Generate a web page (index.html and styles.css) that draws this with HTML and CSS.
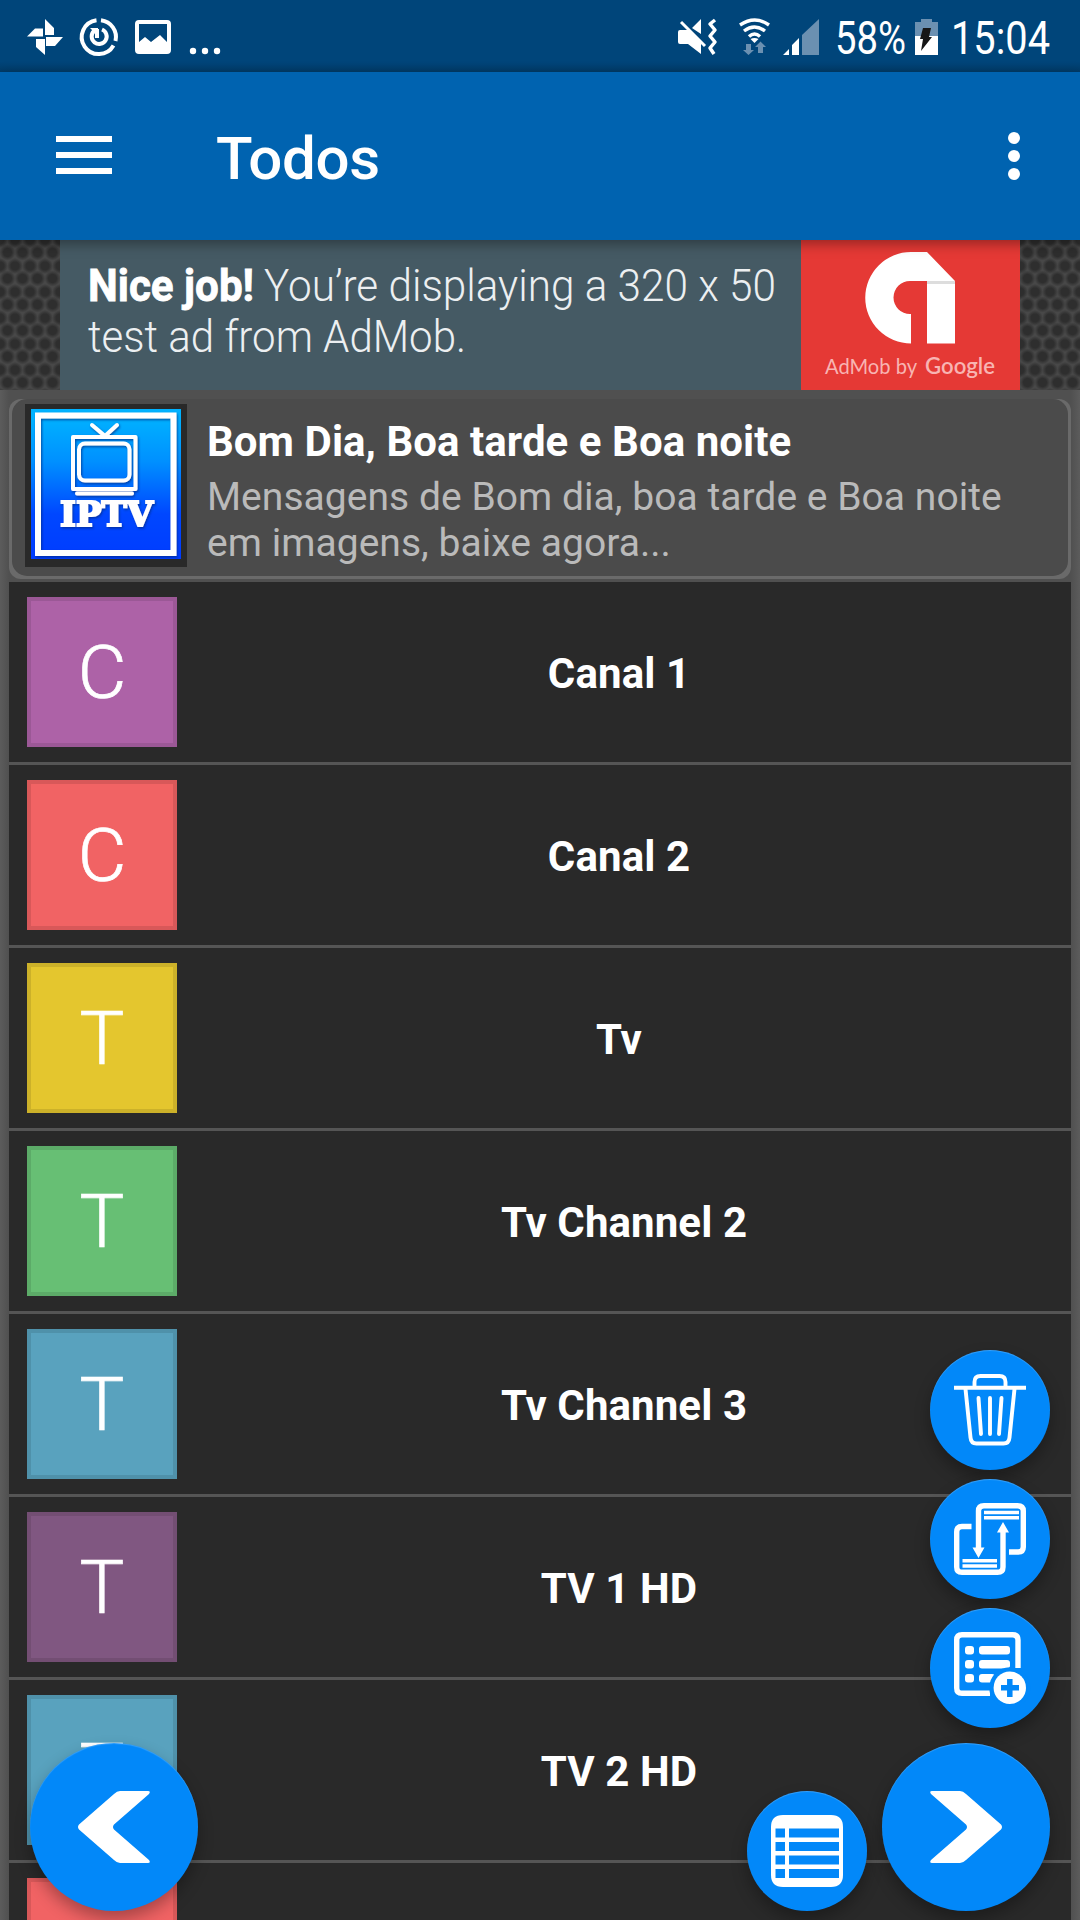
FILE: index.html
```html
<!DOCTYPE html>
<html lang="pt">
<head>
    <meta charset="UTF-8">
    <meta name="viewport" content="width=device-width, initial-scale=1.0">
    <title>IPTV - Todos</title>
    <link rel="stylesheet" href="styles.css">
</head>
<body>
    <div class="screen">
        <!-- Status bar -->
        <div class="status-bar">
            <svg class="status-icons" width="230" height="72" viewBox="0 0 230 72" fill="#fff">
                <path d="M45 19l9 9v7h-9zM27 36.500l8-8h8v8zM46 37h17l-8 9h-9zM36 39h9v16l-9-8z"/>
                <g fill="none" stroke="#fff" stroke-width="4">
                    <path d="M96.500 20.200A17 17 0 1 0 113.500 45.500M101 20.200A17 17 0 0 1 115.500 41"/>
                    <path d="M94 31a7.500 7.500 0 1 0 8-1.500M97 38v-9"/>
                </g>
                <path d="M90 28h8v8z"/>
                <path fill-rule="evenodd" d="M139 20h28q4 0 4 4v26q0 4-4 4h-28q-4 0-4-4V24q0-4 4-4zM139 24v18l6-5 6 5 9-7 7 7V24z"/>
                <circle cx="193" cy="51" r="3.200"/><circle cx="205" cy="51" r="3.200"/><circle cx="217" cy="51" r="3.200"/>
            </svg>
            <svg class="status-icons" width="410" height="72" viewBox="670 0 410 72" fill="#fff">
                <path d="M678 32q0-2 2-2h8l13 13v11l-13-10h-8q-2 0-2-2zM692 28l9-9v15z"/>
                <path d="M681 22l24 24" fill="none" stroke="#fff" stroke-width="3"/>
                <path d="M715 20l-5 4 5 6-5 6 5 6-5 6 4 6" fill="none" stroke="#fff" stroke-width="3.500" stroke-linejoin="round"/>
                <path d="M740 25q15-10 29 0M744 31q10.500-8 21 0M749 36.500q5.500-5 11 0" fill="none" stroke="#fff" stroke-width="3.400"/>
                <path d="M750.500 39q4-2 8 0l-4 4z"/>
                <path fill="#6b90b1" d="M746 44h5v6h3l-5.500 5-5.500-5h3zM758 53v-6h-3l5.500-5.500L766 47h-3v6z"/>
                <path d="M783 55h6v-6zM792 55h7V38l-7 7z"/>
                <path fill="#6b90b1" d="M802 55h17V19l-17 16zM915 22h6v-3h11v3h6v14h-23z"/>
                <path d="M915 36h23v19h-23z"/>
                <path fill="#161616" d="M923 28h8l-2 9h3l-11 14 2-12h-3z"/>
                <text class="status-text" x="835" y="54" textLength="71" lengthAdjust="spacingAndGlyphs">58%</text>
                <text class="status-text" x="951" y="54" textLength="99" lengthAdjust="spacingAndGlyphs">15:04</text>
            </svg>
        </div>

        <!-- Toolbar -->
        <header class="toolbar">
            <div class="menu-button"><span></span><span></span><span></span></div>
            <h1>Todos</h1>
            <div class="more-button"><span></span><span></span><span></span></div>
        </header>

        <!-- Ad banner -->
        <div class="ad-row">
            <div class="ad">
                <svg class="ad-message" width="741" height="150" viewBox="0 0 741 150">
                    <text class="ad-strong" x="28" y="61" textLength="166" lengthAdjust="spacingAndGlyphs">Nice job!</text>
                    <text x="204" y="61" textLength="512" lengthAdjust="spacingAndGlyphs">You’re displaying a 320 x 50</text>
                    <text x="28" y="112" textLength="378" lengthAdjust="spacingAndGlyphs">test ad from AdMob.</text>
                </svg>
                <div class="ad-brand">
                    <svg width="219" height="150" viewBox="801 240 219 150">
                        <path fill="#fff" d="M911 252h16l28 29v62.500h-28v-62.500h-17a16.500 16.500 0 0 0 0 33h1v29.500a45.750 45.750 0 0 1 0-91.500z"/>
                        <path fill="#ddd" d="M927 281h28v3h-28z"/>
                        <text x="825" y="374" textLength="92" lengthAdjust="spacingAndGlyphs">AdMob by</text>
                        <text class="brand-name" x="925" y="374" textLength="70" lengthAdjust="spacingAndGlyphs">Google</text>
                    </svg>
                </div>
            </div>
        </div>

        <main class="content">
            <!-- Promoted app -->
            <div class="promo">
                <div class="promo-inner">
                    <div class="promo-icon">
                        <svg width="150" height="150" viewBox="0 0 150 150">
                            <defs>
                                <linearGradient id="sky" x1="0" y1="0" x2="0" y2="1">
                                    <stop offset=".05" stop-color="#00b2ff"/>
                                    <stop offset=".35" stop-color="#0090ff"/>
                                    <stop offset=".7" stop-color="#0047ff"/>
                                    <stop offset="1" stop-color="#003cff"/>
                                </linearGradient>
                                <filter id="soft" x="-10%" y="-10%" width="120%" height="120%">
                                    <feDropShadow dx="1" dy="1.500" stdDeviation="1" flood-color="#002a80" flood-opacity=".7"/>
                                </filter>
                            </defs>
                            <path fill="url(#sky)" d="M0 0h150v150H0z"/>
                            <g fill="none" stroke="#fff" filter="url(#soft)">
                                <path stroke-width="6" d="M7 6.500h135.500V144H7z"/>
                                <path stroke-width="4" d="M42 28h62.500v52H42z" stroke-linejoin="round"/>
                                <rect x="48" y="34.500" width="50.500" height="37" rx="6" stroke-width="4"/>
                                <path stroke-width="4" stroke-linecap="round" d="M61 16l13 11 12-11M46 84.500h55"/>
                                <text class="iptv" x="29" y="117" textLength="93" lengthAdjust="spacingAndGlyphs">IPTV</text>
                            </g>
                        </svg>
                    </div>
                    <div class="promo-text">
                        <h2>Bom Dia, Boa tarde e Boa noite</h2>
                        <p>Mensagens de Bom dia, boa tarde e Boa noite em imagens, baixe agora...</p>
                    </div>
                </div>
            </div>

            <!-- Channel list -->
            <ul class="channels">
                <li><span class="avatar violet">C</span><b>Canal 1</b></li>
                <li><span class="avatar red">C</span><b>Canal 2</b></li>
                <li><span class="avatar yellow">T</span><b>Tv</b></li>
                <li class="indented"><span class="avatar green">T</span><b>Tv Channel 2</b></li>
                <li class="indented"><span class="avatar blue">T</span><b>Tv Channel 3</b></li>
                <li><span class="avatar plum">T</span><b>TV 1 HD</b></li>
                <li><span class="avatar blue">T</span><b>TV 2 HD</b></li>
                <li><span class="avatar red"></span></li>
            </ul>
        </main>

        <!-- Floating buttons -->
        <div class="fabs">
            <div class="fab fab-large">
                <svg width="72" height="72" viewBox="0 0 72 72" fill="#fff">
                    <path d="M42 0h28q3 0 1 3L36 33.500q-2 2.500 0 5L71 69q2 3-1 3H42q-3 0-6-3L1 38.500q-2-2.500 0-5L36 3q3-3 6-3z"/>
                </svg>
            </div>
            <div class="fab fab-list">
                <svg width="72" height="72" viewBox="0 0 72 72" fill="#fff">
                    <path fill-rule="evenodd" d="M12 0h48q12 0 12 12v48q0 12-12 12H12Q0 72 0 60V12Q0 0 12 0zM4.500 13.500v9H14v-9zM18 13.500v9h50v-9zM4.500 27v9H14v-9zM18 27v9h50v-9zM4.500 40.500v9H14v-9zM18 40.500v9h50v-9zM4.500 54v9H14v-9zM18 54v9h50v-9z"/>
                </svg>
            </div>
            <div class="fab-column">
                <div class="fab">
                    <svg width="72" height="72" viewBox="0 0 72 72" fill="none" stroke="#fff" stroke-width="3.900" stroke-linecap="round">
                        <path stroke-linecap="butt" d="M0 13.700h72"/>
                        <path d="M20.500 13V8q0-6 6-6h19q6 0 6 6v5M11.500 15l5 48.500q.5 6 6 6h27q5.500 0 6-6l5-48.500M24.500 24l2.500 36M36 24v36M47.500 24L45 60"/>
                    </svg>
                </div>
                <div class="fab">
                    <svg width="72" height="72" viewBox="0 0 72 72" fill="none" stroke="#fff" stroke-width="5.400">
                        <path d="M24.500 46V8q0-5.300 5.500-5.300h33.500q5.800 0 5.800 5.300v36q0 5-5 5H55M17.500 23.500H8q-5.300 0-5.300 5.500v35q0 5.300 5.300 5.300h35.500q5.500 0 5.500-5.300V28"/>
                        <path stroke-width="3.400" d="M30 9.500h35M30 14.700h35M8.500 57.700h34.500M8.500 63h34.500"/>
                        <path fill="#fff" stroke="none" d="M18.500 44.500h12L24.500 55zM43 29.500h12L49 19z"/>
                    </svg>
                </div>
                <div class="fab">
                    <svg width="72" height="72" viewBox="0 0 72 72" fill="#fff">
                        <path fill="none" stroke="#fff" stroke-width="5.400" d="M64 36V8q0-5.300-5.500-5.300H8Q2.700 2.700 2.700 8v48q0 5.300 5.300 5.300h28"/>
                        <rect x="11" y="14" width="9" height="8.500" rx="3"/><rect x="25" y="14" width="31" height="8.500" rx="3"/>
                        <rect x="11" y="28" width="9" height="8.500" rx="3"/><rect x="25" y="28" width="31" height="8.500" rx="3"/>
                        <rect x="11" y="42" width="9" height="8.500" rx="3"/><rect x="25" y="42" width="16" height="8.500" rx="3"/>
                        <circle cx="55.800" cy="55.800" r="19" fill="#0288f9" stroke="#0288f9" stroke-width="3"/>
                        <circle cx="55.800" cy="55.800" r="16.200"/>
                        <path stroke="#0288f9" stroke-width="5.500" d="M47 55.800h18M55.800 47v18"/>
                    </svg>
                </div>
                <div class="fab fab-large">
                    <svg width="72" height="72" viewBox="0 0 72 72" fill="#fff">
                        <path d="M30 0H2Q-1 0 1 3l35 30.500q2 2.500 0 5L1 69q-2 3 1 3h28q3 0 6-3l35-30.500q2-2.500 0-5L36 3q-3-3-6-3z"/>
                    </svg>
                </div>
            </div>
        </div>
    </div>
</body>
</html>
```

FILE: styles.css
```css
* {
    box-sizing: border-box;
}

body {
    margin: 0;
    font-family: Roboto, "Liberation Sans", sans-serif;
    color: #fff;
    background-color: #595959;
}

svg {
    display: block;
    overflow: visible;
}

h1, h2, p, ul {
    margin: 0;
    padding: 0;
}

.screen {
    position: relative;
    width: 1080px;
    height: 1920px;
    overflow: hidden;
}

/* Status bar */
.status-bar {
    display: flex;
    justify-content: space-between;
    height: 72px;
    background: linear-gradient(#00457a 62px, #003b68 72px);
}

.status-text {
    font-size: 46px;
}

/* Toolbar */
.toolbar {
    position: relative;
    z-index: 1;
    display: flex;
    align-items: center;
    height: 168px;
    padding: 0 60px 0 56px;
    background-color: #0063b0;
    box-shadow: 0 4px 12px rgba(0, 0, 0, 0.35);
}

.menu-button {
    display: grid;
    gap: 10px;
    width: 56px;
    margin-top: -2px;
}

.menu-button span {
    height: 6px;
    background-color: #fff;
}

.toolbar h1 {
    flex: 1;
    padding: 4px 0 0 104px;
    font-size: 60px;
    font-weight: 500;
    letter-spacing: -0.3px;
}

.more-button {
    display: grid;
    gap: 6px;
}

.more-button span {
    width: 12px;
    height: 12px;
    border-radius: 50%;
    background-color: #fff;
}

/* Ad banner */
.ad-row {
    display: flex;
    justify-content: center;
    height: 150px;
    background-color: #484848;
    background-image:
        radial-gradient(circle at 7.5px 12.5px, #2e2e2e 4px, transparent 8px),
        radial-gradient(circle at 0 0, #2e2e2e 4px, transparent 8px),
        radial-gradient(circle at 15px 0, #2e2e2e 4px, transparent 8px),
        radial-gradient(circle at 0 26px, #2e2e2e 4px, transparent 8px),
        radial-gradient(circle at 15px 26px, #2e2e2e 4px, transparent 8px);
    background-size: 15px 26px;
}

.ad {
    display: flex;
    width: 960px;
    background-color: #455a64;
}

.ad-message {
    fill: #eceff1;
    font-size: 45px;
    font-weight: 300;
}

.ad-strong {
    fill: #fff;
    stroke: #fff;
    stroke-width: 0.8px;
    font-weight: 700;
}

.ad-brand {
    background-color: #e53935;
    fill: #f8b4b2;
    font-family: Lato, sans-serif;
    font-size: 22px;
}

.brand-name {
    font-weight: 600;
}

/* Content */
.content {
    padding: 9px 9px 0;
    background: linear-gradient(90deg, #5c5c5c, #505050 9px, #505050 1071px, #5c5c5c);
}

.promo {
    height: 180px;
    padding: 0 3px 3px;
    border-radius: 12px;
    background-color: #6a6a6a;
}

.promo-inner {
    display: flex;
    height: 177px;
    padding: 5px 13px;
    border-radius: 15px;
    background-color: #4b4b4b;
}

.promo-icon {
    width: 162px;
    height: 163px;
    padding: 5px 6px;
    background-color: #292929;
}

.iptv {
    fill: #fff;
    stroke-width: 2px;
    font-family: "DejaVu Serif", serif;
    font-size: 33px;
    font-weight: 700;
}

.promo-text {
    flex: 1;
    padding: 13px 0 0 20px;
}

.promo-text h2 {
    font-size: 42px;
    line-height: 49px;
    font-weight: 700;
    letter-spacing: 0.05px;
}

.promo-text p {
    padding-top: 8px;
    font-size: 39px;
    line-height: 46px;
    letter-spacing: 0.04px;
    color: #bababa;
}

/* Channel list */
.channels {
    display: grid;
    gap: 3px;
    margin-top: 3px;
    list-style: none;
    background-color: #555;
}

.channels li {
    display: flex;
    align-items: center;
    height: 180px;
    padding-left: 18px;
    background-color: #292929;
}

.channels b {
    flex: 1;
    padding: 2px 10px 0 0;
    font-size: 42px;
    letter-spacing: 0.1px;
    text-align: center;
}

.channels .indented b {
    padding-right: 0;
}

.avatar {
    width: 150px;
    height: 150px;
    border: 4px solid rgba(0, 0, 0, 0.1);
    font-size: 75px;
    font-weight: 300;
    line-height: 142px;
    text-align: center;
    -webkit-text-stroke: 0.7px #fff;
}

.violet {
    background-color: #ad62a7;
}

.red {
    background-color: #f16364;
}

.yellow {
    background-color: #e4c62e;
}

.green {
    background-color: #67bf74;
}

.blue {
    background-color: #59a2be;
}

.plum {
    background-color: #805781;
}

/* Floating buttons over the list */
.fabs {
    position: absolute;
    right: 30px;
    bottom: 9px;
    left: 30px;
    display: flex;
    align-items: flex-end;
}

.fab {
    display: flex;
    align-items: center;
    justify-content: center;
    width: 120px;
    height: 120px;
    border-radius: 50%;
    background-color: #0288f9;
    box-shadow: 0 8px 16px rgba(0, 0, 0, 0.3), inset 0 1px 1px rgba(255, 255, 255, 0.2);
}

.fab-large {
    width: 168px;
    height: 168px;
}

.fab-list {
    margin: 0 15px 0 auto;
}

.fab-column {
    display: flex;
    flex-direction: column;
    align-items: flex-end;
    gap: 9px;
}

.fab-column .fab-large {
    margin-top: 6px;
}
```
